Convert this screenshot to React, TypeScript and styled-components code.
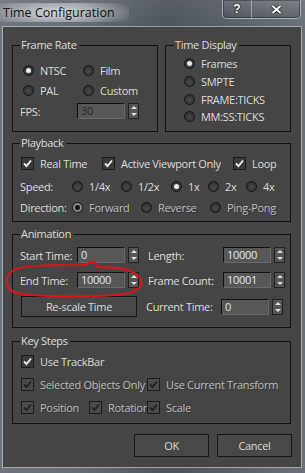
import styled, { createGlobalStyle } from "styled-components"

const GlobalStyle = createGlobalStyle`
    html, body {
        margin: 0;
        padding: 0;
        background: #5d636a;
    }
    body {
        font-family: "Open Sans", "Liberation Sans", sans-serif;
    }
`

const Window = styled.div`
    position: relative;
    width: 305px;
    height: 473px;
    display: flex;
    flex-direction: column;
    box-sizing: border-box;
    background:
        linear-gradient(180deg, rgba(255, 255, 255, 0.06) 0%, rgba(0, 0, 0, 0) 30px),
        linear-gradient(90deg, #6e747b 0%, #666c73 25%, #4d535a 55%, #585e65 75%, #6b7178 100%);
    overflow: hidden;
`

const TitleBar = styled.div`
    height: 27px;
    flex: none;
    display: flex;
    align-items: flex-start;
    justify-content: space-between;
    padding: 0 4px 0 0;
`

const Title = styled.div`
    margin-top: 3px;
    padding: 2px 14px 2px 3px;
    font-family: "Open Sans", "Noto Sans", sans-serif;
    font-size: 12.5px;
    line-height: 15px;
    color: #111;
    background: radial-gradient(ellipse 62% 90% at 45% 50%, rgba(232, 236, 240, 0.85) 0%, rgba(212, 217, 222, 0.45) 60%, rgba(210, 215, 220, 0) 100%);
`

const CaptionGroup = styled.div`
    display: flex;
    height: 18px;
    border: 1px solid rgba(225, 230, 235, 0.55);
    border-top: none;
    border-radius: 0 0 5px 5px;
    box-shadow: inset 0 0 0 1px rgba(20, 25, 30, 0.45);
    overflow: hidden;
`

const CaptionButton = styled.div<{ $w: number }>`
    width: ${(p) => p.$w}px;
    display: flex;
    align-items: center;
    justify-content: center;
    color: #fff;
    font-family: "Liberation Sans", sans-serif;
    font-weight: bold;
    font-size: 12px;
    text-shadow: 0 0 2px #000, 0 0 1px #000;
    background: linear-gradient(180deg, rgba(255, 255, 255, 0.08), rgba(0, 0, 0, 0.12));
    & + & {
        border-left: 1px solid rgba(225, 230, 235, 0.45);
    }
`

const Client = styled.div`
    flex: 1;
    margin: 0 4px 6px 3px;
    padding: 18px 10px 0 9px;
    background: #454545;
    box-shadow: 0 0 0 1px rgba(200, 208, 215, 0.6);
    display: flex;
    flex-direction: column;
    color: #dcdcdc;
    font-family: "Open Sans", "Liberation Sans", sans-serif;
    font-size: 11px;
    letter-spacing: -0.3px;
`

const TopRow = styled.div`
    display: flex;
    gap: 7px;
`

const Group = styled.div<{ $w?: number; $h: number; $mt?: number; $pl: number }>`
    box-sizing: border-box;
    width: ${(p) => (p.$w ? `${p.$w}px` : "auto")};
    height: ${(p) => p.$h}px;
    margin-top: ${(p) => p.$mt ?? 0}px;
    padding: 0 0 0 ${(p) => p.$pl}px;
    border: 1px solid #121212;
    display: flex;
    flex-direction: column;
`

/* sits on the top border; $gap is the space from the border to the first row */
const Legend = styled.div<{ $x: number; $gap: number }>`
    align-self: flex-start;
    height: 14px;
    line-height: 14px;
    margin: -8px 0 ${(p) => p.$gap - 6}px ${(p) => p.$x}px;
    padding: 0 2px 0 1px;
    background: #454545;
    white-space: nowrap;
`

const Row = styled.div<{ $cols: string; $h: number; $mt?: number; $ml?: number }>`
    display: grid;
    grid-template-columns: ${(p) => p.$cols};
    align-items: center;
    height: ${(p) => p.$h}px;
    margin-top: ${(p) => p.$mt ?? 0}px;
    margin-left: ${(p) => p.$ml ?? 0}px;
    white-space: nowrap;
`

const FlexRow = styled.div<{ $h: number; $mt?: number }>`
    display: flex;
    align-items: center;
    height: ${(p) => p.$h}px;
    margin-top: ${(p) => p.$mt ?? 0}px;
    white-space: nowrap;
`

const Item = styled.span<{ $disabled?: boolean }>`
    display: inline-flex;
    align-items: center;
    gap: 6px;
    color: ${(p) => (p.$disabled ? "#bdbdbd" : "#dcdcdc")};
    text-shadow: ${(p) => (p.$disabled ? "1px 1px 0 #363636" : "none")};
`

const Dot = styled.span<{ $on?: boolean; $disabled?: boolean }>`
    position: relative;
    width: 11px;
    height: 11px;
    box-sizing: border-box;
    border-radius: 50%;
    border: 1px solid #141414;
    background: ${(p) => (p.$disabled && p.$on ? "#8a8a8a" : "radial-gradient(circle at 50% 60%, #4a4a4a, #262626)")};
    flex: none;
    &::after {
        content: "";
        display: ${(p) => (p.$on ? "block" : "none")};
        position: absolute;
        left: 2px;
        top: 2px;
        width: 5px;
        height: 5px;
        border-radius: 50%;
        background: ${(p) => (p.$disabled ? "#151515" : "#ececec")};
    }
`

const Box = styled.span<{ $disabled?: boolean }>`
    width: 13px;
    height: 13px;
    box-sizing: border-box;
    border: 1px solid #1a1a1a;
    background: ${(p) => (p.$disabled ? "#4a4a4a" : "#3a3a3a")};
    display: flex;
    align-items: center;
    justify-content: center;
    flex: none;
`

const FieldLabel = styled.span<{ $w: number; $ml?: number }>`
    width: ${(p) => p.$w}px;
    margin-left: ${(p) => p.$ml ?? 0}px;
    flex: none;
`

const NumInput = styled.div<{ $disabled?: boolean }>`
    box-sizing: border-box;
    width: 48px;
    height: 16px;
    padding: 0 0 0 3px;
    line-height: 14px;
    background: #575757;
    border: 1px solid #111;
    border-right-color: #6a6a6a;
    border-bottom-color: #6a6a6a;
    color: ${(p) => (p.$disabled ? "#262b36" : "#e6e6e6")};
    flex: none;
`

const Spinner = styled.div`
    box-sizing: border-box;
    width: 11px;
    height: 16px;
    margin-left: 3px;
    border: 1px solid #202020;
    background: #555;
    display: flex;
    flex-direction: column;
    align-items: center;
    justify-content: space-around;
    flex: none;
`

const Arrow = styled.span<{ $up?: boolean }>`
    width: 0;
    height: 0;
    border-left: 3px solid transparent;
    border-right: 3px solid transparent;
    ${(p) => (p.$up ? "border-bottom: 3px solid #e0e0e0;" : "border-top: 3px solid #e0e0e0;")}
`

const Button = styled.div<{ $w: number; $h: number; $ml?: number }>`
    box-sizing: border-box;
    width: ${(p) => p.$w}px;
    height: ${(p) => p.$h}px;
    margin-left: ${(p) => p.$ml ?? 0}px;
    border: 1px solid #161616;
    background: #484848;
    display: flex;
    align-items: center;
    justify-content: center;
    color: #dcdcdc;
    flex: none;
`

const ButtonRow = styled.div`
    display: flex;
    justify-content: flex-end;
    gap: 8px;
    margin: 10px -1px 0 0;
`

const Annotation = styled.svg`
    position: absolute;
    left: 0;
    top: 0;
    pointer-events: none;
`

function Radio(props: { label: string; on?: boolean; disabled?: boolean }) {
    return (
        <Item $disabled={props.disabled}>
            <Dot $on={props.on} $disabled={props.disabled} />
            {props.label}
        </Item>
    )
}

function Check(props: { label: string; disabled?: boolean }) {
    return (
        <Item $disabled={props.disabled}>
            <Box $disabled={props.disabled}>
                <svg width="9" height="9" viewBox="0 0 9 9">
                    <path d="M1 4.5 L3.5 7 L8 1.5" fill="none" stroke={props.disabled ? "#222" : "#ececec"} strokeWidth="1.9" />
                </svg>
            </Box>
            {props.label}
        </Item>
    )
}

function Spin() {
    return (
        <Spinner>
            <Arrow $up />
            <Arrow />
        </Spinner>
    )
}

export default function App() {
    return (
        <Window>
            <GlobalStyle />
            <TitleBar>
                <Title>Time Configuration</Title>
                <CaptionGroup>
                    <CaptionButton $w={28}>?</CaptionButton>
                    <CaptionButton $w={48}>
                        <svg width="11" height="9" viewBox="0 0 11 9">
                            <path d="M1.5 1 L9.5 8 M9.5 1 L1.5 8" stroke="#202428" strokeWidth="3.6" />
                            <path d="M1.5 1 L9.5 8 M9.5 1 L1.5 8" stroke="#fff" strokeWidth="2" />
                        </svg>
                    </CaptionButton>
                </CaptionGroup>
            </TitleBar>
            <Client>
                <TopRow>
                    <Group $w={146} $h={87} $pl={7}>
                        <Legend $x={0} $gap={14}>Frame Rate</Legend>
                        <Row $cols="60px auto" $h={20} $ml={3}>
                            <Radio label="NTSC" on />
                            <Radio label="Film" />
                        </Row>
                        <Row $cols="60px auto" $h={20} $ml={3}>
                            <Radio label="PAL" />
                            <Radio label="Custom" />
                        </Row>
                        <FlexRow $h={20} $mt={1}>
                            <FieldLabel $w={57}>FPS:</FieldLabel>
                            <NumInput $disabled>30</NumInput>
                            <Spin />
                        </FlexRow>
                    </Group>
                    <Group $w={126} $h={87} $pl={18}>
                        <Legend $x={-10} $gap={9}>Time Display</Legend>
                        <Row $cols="auto" $h={17.7}>
                            <Radio label="Frames" on />
                        </Row>
                        <Row $cols="auto" $h={17.7}>
                            <Radio label="SMPTE" />
                        </Row>
                        <Row $cols="auto" $h={17.7}>
                            <Radio label="FRAME:TICKS" />
                        </Row>
                        <Row $cols="auto" $h={17.7}>
                            <Radio label="MM:SS:TICKS" />
                        </Row>
                    </Group>
                </TopRow>

                <Group $h={79} $mt={11} $pl={7}>
                    <Legend $x={0} $gap={10}>Playback</Legend>
                    <Row $cols="81px 131px auto" $h={18} $ml={1}>
                        <Check label="Real Time" />
                        <Check label="Active Viewport Only" />
                        <Check label="Loop" />
                    </Row>
                    <Row $cols="52px 49px 50px 37px 38px auto" $h={18} $mt={5}>
                        <span>Speed:</span>
                        <Radio label="1/4x" />
                        <Radio label="1/2x" />
                        <Radio label="1x" on />
                        <Radio label="2x" />
                        <Radio label="4x" />
                    </Row>
                    <Row $cols="52px 69px 69px auto" $h={18} $mt={3}>
                        <span>Direction:</span>
                        <Radio label="Forward" on disabled />
                        <Radio label="Reverse" disabled />
                        <Radio label="Ping-Pong" disabled />
                    </Row>
                </Group>

                <Group $h={94} $mt={12} $pl={7}>
                    <Legend $x={0} $gap={12}>Animation</Legend>
                    <FlexRow $h={16}>
                        <FieldLabel $w={57}>Start Time:</FieldLabel>
                        <NumInput>0</NumInput>
                        <Spin />
                        <FieldLabel $w={75} $ml={9}>Length:</FieldLabel>
                        <NumInput>10000</NumInput>
                        <Spin />
                    </FlexRow>
                    <FlexRow $h={16} $mt={9}>
                        <FieldLabel $w={57}>End Time:</FieldLabel>
                        <NumInput>10000</NumInput>
                        <Spin />
                        <FieldLabel $w={75} $ml={9}>Frame Count:</FieldLabel>
                        <NumInput>10001</NumInput>
                        <Spin />
                    </FlexRow>
                    <FlexRow $h={21} $mt={8}>
                        <Button $w={116} $h={21} $ml={1}>Re-scale Time</Button>
                        <FieldLabel $w={75} $ml={9}>Current Time:</FieldLabel>
                        <NumInput>0</NumInput>
                        <Spin />
                    </FlexRow>
                </Group>

                <Group $h={83} $mt={13} $pl={7}>
                    <Legend $x={0} $gap={10}>Key Steps</Legend>
                    <Row $cols="auto" $h={18} $ml={1}>
                        <Check label="Use TrackBar" />
                    </Row>
                    <Row $cols="126px auto" $h={18} $mt={5} $ml={1}>
                        <Check label="Selected Objects Only" disabled />
                        <Check label="Use Current Transform" disabled />
                    </Row>
                    <Row $cols="68px 58px auto" $h={18} $mt={5} $ml={1}>
                        <Check label="Position" disabled />
                        <Check label="Rotation" disabled />
                        <Check label="Scale" disabled />
                    </Row>
                </Group>

                <ButtonRow>
                    <Button $w={75} $h={23}>OK</Button>
                    <Button $w={75} $h={23}>Cancel</Button>
                </ButtonRow>
            </Client>

            <Annotation width="305" height="473" viewBox="0 0 305 473">
                <path
                    d="M84 265 L95 261 L97 267 C118 267 137 269 141 280 C144 290 132 295 100 296 C62 297 30 297 14 292 C4 287 5 275 14 270 C26 265 48 265 84 265"
                    fill="none"
                    stroke="#e0121a"
                    strokeWidth="2"
                    strokeLinecap="round"
                    strokeLinejoin="round"
                />
            </Annotation>
        </Window>
    )
}
